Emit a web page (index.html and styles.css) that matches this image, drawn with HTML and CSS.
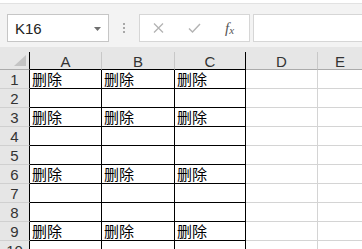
FILE: index.html
```html
<!DOCTYPE html>
<html>
<head>
<meta charset="utf-8">
<link rel="stylesheet" href="styles.css">
</head>
<body>
<div class="bar">
  <div class="namebox">
    <span class="ref">K16</span>
    <svg class="caret" width="7" height="4" viewBox="0 0 7 4"><path d="M0 0H7L3.5 4Z" fill="#6f6f6f"/></svg>
  </div>
  <div class="dots"><i></i><i></i><i></i></div>
  <div class="btns">
    <svg width="11" height="10" viewBox="0 0 11 10"><path d="M1 0.5L10 9.5M10 0.5L1 9.5" stroke="#b3b3b3" stroke-width="1.3"/></svg>
    <svg width="13" height="10" viewBox="0 0 13 10"><path d="M1 5.5L4.5 9L12 1" stroke="#b3b3b3" stroke-width="1.4" fill="none"/></svg>
    <span class="fx">f<sub>x</sub></span>
  </div>
  <div class="formula"></div>
</div>
<div class="gap"></div>
<div class="grid">
  <div class="hd corner"><svg width="12" height="11" viewBox="0 0 12 11"><path d="M12 0V11H0Z" fill="#c4c4c4"/></svg></div>
  <div class="hd col k">A</div><div class="hd col k">B</div><div class="hd col k">C</div><div class="hd col">D</div><div class="hd col last">E</div>

  <div class="rh">1</div><div class="c k">删除</div><div class="c k">删除</div><div class="c k">删除</div><div class="c g"></div><div class="c g last"></div>
  <div class="rh">2</div><div class="c k"></div><div class="c k"></div><div class="c k"></div><div class="c g"></div><div class="c g last"></div>
  <div class="rh">3</div><div class="c k">删除</div><div class="c k">删除</div><div class="c k">删除</div><div class="c g"></div><div class="c g last"></div>
  <div class="rh">4</div><div class="c k"></div><div class="c k"></div><div class="c k"></div><div class="c g"></div><div class="c g last"></div>
  <div class="rh">5</div><div class="c k"></div><div class="c k"></div><div class="c k"></div><div class="c g"></div><div class="c g last"></div>
  <div class="rh">6</div><div class="c k">删除</div><div class="c k">删除</div><div class="c k">删除</div><div class="c g"></div><div class="c g last"></div>
  <div class="rh">7</div><div class="c k"></div><div class="c k"></div><div class="c k"></div><div class="c g"></div><div class="c g last"></div>
  <div class="rh">8</div><div class="c k"></div><div class="c k"></div><div class="c k"></div><div class="c g"></div><div class="c g last"></div>
  <div class="rh">9</div><div class="c k">删除</div><div class="c k">删除</div><div class="c k">删除</div><div class="c g"></div><div class="c g last"></div>
  <div class="rh">10</div><div class="c k"></div><div class="c k"></div><div class="c k"></div><div class="c g"></div><div class="c g last"></div>
</div>
</body>
</html>
```

FILE: styles.css
```css
* { box-sizing: border-box; }
html, body {
  margin: 0;
  padding: 0;
  width: 362px;
  height: 249px;
  overflow: hidden;
  background: #ffffff;
  font-family: "Liberation Sans", "Noto Sans CJK SC", sans-serif;
}
.bar {
  height: 44px;
  background: #f3f3f3;
  border-top: 1px solid #e2e2e2;
  margin-top: 3px;
  display: flex;
  align-items: flex-start;
  padding-top: 10px;
  padding-left: 7px;
}
.namebox {
  width: 102px;
  height: 28px;
  background: #ffffff;
  border: 1px solid #c6c6c6;
  display: flex;
  align-items: center;
  justify-content: space-between;
  padding: 0 7px 0 7px;
}
.ref {
  font-size: 15px;
  color: #222;
}
.caret { margin-top: 1px; }
.dots {
  width: 30px;
  height: 28px;
  display: flex;
  flex-direction: column;
  align-items: center;
  justify-content: center;
  gap: 2px;
}
.dots i {
  display: block;
  width: 2px;
  height: 2px;
  background: #a8a8a8;
}
.btns {
  width: 111px;
  height: 28px;
  background: #ffffff;
  border: 1px solid #d6d6d6;
  display: flex;
  align-items: center;
  padding-left: 13px;
  gap: 24px;
}
.fx {
  font-family: "Liberation Serif", serif;
  font-style: italic;
  font-size: 15px;
  color: #555;
  margin-left: 0;
}
.fx sub {
  font-size: 11px;
  vertical-align: -1px;
}
.formula {
  flex: 1;
  height: 28px;
  margin-left: 3px;
  background: #ffffff;
  border: 1px solid #d6d6d6;
  border-right: none;
}
.gap {
  height: 5px;
  background: #e6e6e6;
}
.grid {
  display: grid;
  grid-template-columns: 30px 72px 73px 71px 72px 1fr;
  grid-auto-rows: 19px;
  grid-template-rows: 18px;
  background: #fff;
}
.hd {
  background: #e6e6e6;
  border-bottom: 1px solid #ababab;
  border-right: 1px solid #c8c8c8;
  font-size: 15px;
  color: #333;
  display: flex;
  align-items: center;
  justify-content: center;
  padding-top: 1px;
}
.hd.k { border-bottom-color: #000; }
.hd.col:nth-child(4) { border-right-color: #000; }
.corner {
  justify-content: flex-end;
  align-items: flex-end;
  padding: 0 3px 3px 0;
  border-right-color: #000;
}
.hd.last { border-right: none; }
.rh {
  background: #e6e6e6;
  border-right: 1px solid #000;
  border-bottom: 1px solid #d0d0d0;
  font-size: 15px;
  color: #333;
  display: flex;
  align-items: center;
  justify-content: center;
  padding-top: 1px;
}
.c {
  border-right: 1px solid #d4d4d4;
  border-bottom: 1px solid #d4d4d4;
  font-family: "Noto Sans CJK SC", sans-serif;
  font-size: 15px;
  line-height: 18px;
  color: #000;
  padding-left: 2px;
}
.c.k {
  border-right-color: #000;
  border-bottom-color: #000;
}
.c.last { border-right: none; }
```
